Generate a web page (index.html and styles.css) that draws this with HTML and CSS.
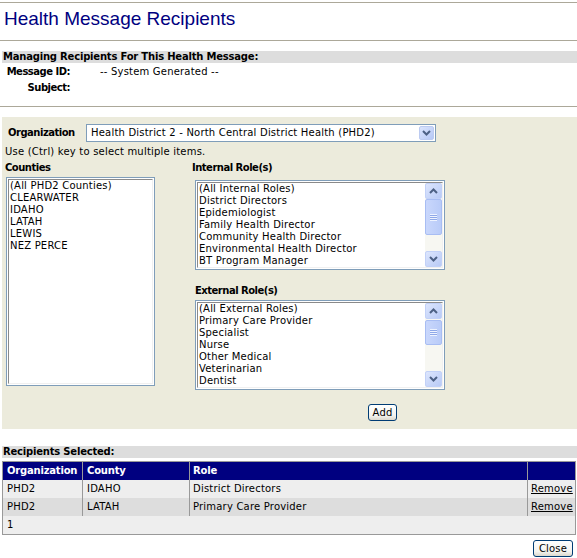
FILE: index.html
```html
<!DOCTYPE html>
<html>
<head>
<meta charset="utf-8">
<title>Health Message Recipients</title>
<link rel="stylesheet" href="styles.css">
</head>
<body>
<div class="rule rule-top"></div>
<h1 class="title">Health Message Recipients</h1>
<div class="rule"></div>
<div class="bar">Managing Recipients For This Health Message:</div>
<div class="info">
  <div class="info-row"><span class="info-lbl">Message ID:</span><span class="info-val">-- System Generated --</span></div>
  <div class="info-row"><span class="info-lbl">Subject:</span><span class="info-val"></span></div>
</div>
<div class="rule rule-mid"></div>

<div class="panel">
  <div class="org-row">
    <span class="org-lbl">Organization</span>
    <div class="select">
      <span class="select-text">Health District 2 - North Central District Health (PHD2)</span>
      <span class="dd-btn"><svg width="13" height="12" viewBox="0 0 13 12"><polyline points="3,4 6.5,7.5 10,4" fill="none" stroke="#4d6185" stroke-width="2"/></svg></span>
    </div>
  </div>
  <div class="hint">Use (Ctrl) key to select multiple items.</div>
  <div class="cols">
    <div class="col-counties">
      <div class="col-lbl">Counties</div>
      <div class="listbox counties">
        <div class="lb-inner">
          <div class="lb-items">
            <div>(All PHD2 Counties)</div>
            <div>CLEARWATER</div>
            <div>IDAHO</div>
            <div>LATAH</div>
            <div>LEWIS</div>
            <div>NEZ PERCE</div>
          </div>
        </div>
      </div>
    </div>
    <div class="col-roles">
      <div class="col-lbl lbl-internal">Internal Role(s)</div>
      <div class="listbox roles">
        <div class="lb-inner">
          <div class="lb-items">
            <div>(All Internal Roles)</div>
            <div>District Directors</div>
            <div>Epidemiologist</div>
            <div>Family Health Director</div>
            <div>Community Health Director</div>
            <div>Environmental Health Director</div>
            <div>BT Program Manager</div>
          </div>
          <div class="sb">
            <span class="sb-btn"><svg width="13" height="12" viewBox="0 0 13 12"><polyline points="3,8 6.5,4.5 10,8" fill="none" stroke="#4d6185" stroke-width="2"/></svg></span>
            <span class="sb-thumb thumb-int"><span class="grip"></span></span>
            <span class="sb-fill"></span>
            <span class="sb-btn"><svg width="13" height="12" viewBox="0 0 13 12"><polyline points="3,4 6.5,7.5 10,4" fill="none" stroke="#4d6185" stroke-width="2"/></svg></span>
          </div>
        </div>
      </div>
      <div class="col-lbl lbl-external">External Role(s)</div>
      <div class="listbox roles ext-list">
        <div class="lb-inner">
          <div class="lb-items">
            <div>(All External Roles)</div>
            <div>Primary Care Provider</div>
            <div>Specialist</div>
            <div>Nurse</div>
            <div>Other Medical</div>
            <div>Veterinarian</div>
            <div>Dentist</div>
          </div>
          <div class="sb">
            <span class="sb-btn"><svg width="13" height="12" viewBox="0 0 13 12"><polyline points="3,8 6.5,4.5 10,8" fill="none" stroke="#4d6185" stroke-width="2"/></svg></span>
            <span class="sb-thumb thumb-ext"><span class="grip"></span></span>
            <span class="sb-fill"></span>
            <span class="sb-btn"><svg width="13" height="12" viewBox="0 0 13 12"><polyline points="3,4 6.5,7.5 10,4" fill="none" stroke="#4d6185" stroke-width="2"/></svg></span>
          </div>
        </div>
      </div>
      <div class="add-row"><button class="btn btn-add">Add</button></div>
    </div>
  </div>
</div>

<div class="bar bar-recip">Recipients Selected:</div>
<table class="grid">
  <colgroup><col class="c1"><col class="c2"><col class="c3"><col class="c4"></colgroup>
  <thead>
    <tr><th>Organization</th><th class="sep">County</th><th class="sep">Role</th><th class="sep"></th></tr>
  </thead>
  <tbody>
    <tr class="odd"><td>PHD2</td><td class="sep">IDAHO</td><td class="sep">District Directors</td><td class="sep"><a href="#" class="rm">Remove</a></td></tr>
    <tr class="even"><td>PHD2</td><td class="sep">LATAH</td><td class="sep">Primary Care Provider</td><td class="sep"><a href="#" class="rm">Remove</a></td></tr>
    <tr class="foot"><td colspan="4">1</td></tr>
  </tbody>
</table>
<div class="close-row"><button class="btn btn-close">Close</button></div>
</body>
</html>
```
FILE: styles.css
```css
* { box-sizing: border-box; }
body {
  margin: 0;
  width: 577px;
  background: #fff;
  color: #000;
  font: 10px/12px "DejaVu Sans", Verdana, sans-serif;
  letter-spacing: 0.2px;
}
.bar, .grid th { letter-spacing: -0.2px; }
.info-lbl, .org-lbl, .col-lbl { letter-spacing: -0.5px; }
.rule { height: 1px; background: #aca899; }
.rule-top { margin-top: 2px; }
.title {
  margin: 5px 0 10px 4px;
  font: normal 19px/22px "Liberation Sans", Arial, sans-serif;
  color: #000080;
  letter-spacing: 0;
}
.bar {
  margin: 10px 0 0 2px;
  padding-left: 1px;
  height: 12px;
  line-height: 12px;
  background: #dddddd;
  font-weight: bold;
  white-space: nowrap;
}
.info { margin-top: 1px; }
.info-row { display: flex; height: 16px; align-items: center; white-space: nowrap; }
.info-lbl { width: 70px; text-align: right; font-weight: bold; }
.info-val { margin-left: 30px; }
.rule-mid { margin-top: 10px; }

.panel {
  margin: 10px 0 0 2px;
  padding: 7px 0 8px 3px;
  background: #ecebdc;
}
.org-row { display: flex; align-items: center; height: 18px; padding-left: 3px; }
.org-lbl { width: 78px; font-weight: bold; white-space: nowrap; }
.select {
  width: 350px;
  height: 18px;
  border: 1px solid #7f9db9;
  background: #fff;
  display: flex;
  align-items: center;
}
.select-text { flex: 1; padding-left: 4px; white-space: nowrap; }
.dd-btn {
  width: 15px;
  height: 14px;
  margin-right: 1px;
  border: 1px solid #bccbf1;
  border-radius: 2px;
  background: linear-gradient(135deg, #dbe5fd, #b6c8f6);
  display: flex;
  align-items: center;
  justify-content: center;
}
.hint { margin-top: 4px; }
.cols { display: flex; align-items: flex-start; margin-top: 4px; }
.col-counties { width: 150px; }
.col-roles { width: 250px; margin-left: 40px; }
.col-lbl { font-weight: bold; height: 12px; white-space: nowrap; }
.lbl-internal { margin-left: -3px; }
.lbl-external { margin-top: 15px; }

.listbox {
  border: 1px solid #7f9db9;
  padding: 1px;
  background: #fff;
}
.lb-inner {
  height: 100%;
  display: flex;
  border-top: 1px solid #8a8a8a;
  border-left: 1px solid #8a8a8a;
  border-right: 1px solid #f0f0f0;
  border-bottom: 1px solid #f0f0f0;
}
.lb-items { flex: 1; padding-left: 1px; white-space: nowrap; overflow: hidden; }
.lb-items div { height: 12px; line-height: 12px; }
.counties { margin-top: 3px; margin-left: 1px; width: 149px; height: 209px; }
.roles { margin-top: 6px; height: 90px; }
.ext-list { margin-top: 3px; }

.sb {
  width: 17px;
  display: flex;
  flex-direction: column;
  background: #f7f7f2;
}
.sb-btn {
  height: 16px;
  border: 1px solid #c2d1f8;
  border-radius: 2px;
  background: linear-gradient(135deg, #dde6fd, #b8caf6);
  display: flex;
  align-items: center;
  justify-content: center;
}
.sb-thumb {
  border: 1px solid #a8bdf3;
  border-radius: 2px;
  background: linear-gradient(90deg, #c9d7fc, #b9cbf8);
  display: flex;
  align-items: center;
  justify-content: center;
}
.thumb-int { height: 36px; }
.thumb-ext { height: 25px; margin-top: 1px; }
.grip {
  width: 7px;
  height: 7px;
  background: repeating-linear-gradient(#eef3ff 0 1px, #8fa8e8 1px 2px);
}
.sb-fill { flex: 1; }

.add-row { margin-top: 14px; padding-left: 173px; }
.btn {
  font: 10px/15px "DejaVu Sans", Verdana, sans-serif;
  letter-spacing: 0.2px;
  height: 17px;
  padding: 0;
  border: 1px solid #003c74;
  border-radius: 3px;
  background: linear-gradient(#ffffff, #f3f3ef 70%, #dcd8cc);
  color: #000;
}
.btn-add { width: 29px; }
.btn-close { width: 40px; }

.bar-recip { margin-top: 17px; }
.grid {
  margin: 3px 0 0 2px;
  width: 574px;
  border: 1px solid #999;
  border-collapse: separate;
  border-spacing: 0;
  table-layout: fixed;
}
.c1 { width: 79px; }
.c2 { width: 107px; }
.c3 { width: 338px; }
.c4 { width: 48px; }
.grid th, .grid td {
  height: 18px;
  padding: 0 2px 0 4px;
  line-height: 18px;
  text-align: left;
  white-space: nowrap;
  overflow: hidden;
}
.grid th { background: #000080; color: #fff; font-weight: bold; }
.grid .sep { border-left: 1px solid #999; }
.grid td.sep:nth-child(3), .grid th.sep:nth-child(3), .grid td.sep:nth-child(4) { padding-left: 3px; }
.odd td, .foot td { background: #eeeeee; }
.even td { background: #dddddd; }
.rm { color: #000; text-decoration: underline; }
.close-row { display: flex; justify-content: flex-end; margin-top: 5px; padding-right: 4px; }
```
